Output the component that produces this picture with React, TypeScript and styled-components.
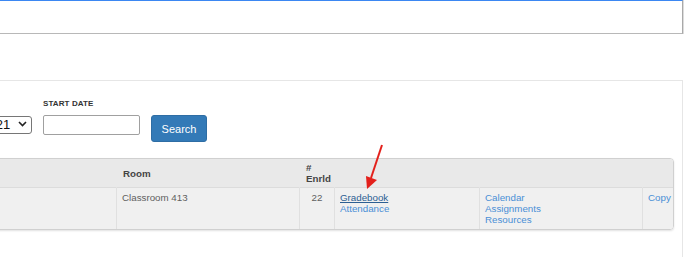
import { styled, createGlobalStyle } from "styled-components";

const GlobalStyle = createGlobalStyle`
  html, body {
    margin: 0;
    padding: 0;
    background: #fff;
  }
  body {
    font-family: "Liberation Sans", Arial, sans-serif;
    overflow: hidden;
  }
`;

const Page = styled.div`
  position: relative;
  width: 688px;
  height: 257px;
  overflow: hidden;
`;

const TopBox = styled.div`
  box-sizing: border-box;
  margin-left: -60px;
  width: 743px;
  height: 34px;
  border-top: 1px solid #3b87f2;
  border-right: 1px solid #a9a9a9;
  border-bottom: 1px solid #b8b8b8;
  box-shadow: 1px 0 0 #dcdcdc;
  background: #fff;
`;

const Panel = styled.div`
  box-sizing: border-box;
  margin-top: 46px;
  margin-left: -60px;
  width: 743px;
  height: 200px;
  padding: 17px 8px 0 20px;
  border-top: 1px solid #e6e6e6;
  border-right: 1px solid #e6e6e6;
`;

const Filters = styled.div`
  display: flex;
  align-items: flex-start;
  gap: 11px;
`;

const FormGroup = styled.div<{ $shift?: number }>`
  display: flex;
  flex-direction: column;
  margin-left: ${(p) => p.$shift ?? 0}px;
`;

const Label = styled.label`
  display: block;
  height: 14px;
  margin-bottom: 3px;
  font-size: 8px;
  line-height: 12px;
  font-weight: bold;
  color: #333;
  letter-spacing: 0.1px;
  white-space: nowrap;
`;

const SelectWrap = styled.div`
  position: relative;
  width: 88px;
  height: 18px;
`;

const Select = styled.select`
  box-sizing: border-box;
  appearance: none;
  width: 100%;
  height: 100%;
  padding: 0 0 0 3px;
  border: 1px solid #767676;
  border-radius: 3px;
  background: #fff;
  color: #111;
  font-family: "Liberation Sans", Arial, sans-serif;
  font-size: 13px;
`;

const Chevron = styled.svg`
  position: absolute;
  right: 5px;
  top: 6px;
  pointer-events: none;
`;

const DateInput = styled.input`
  box-sizing: border-box;
  width: 97px;
  height: 20px;
  border: 1px solid #a0a0a0;
  border-radius: 2px;
  background: #fff;
`;

const SearchButton = styled.button`
  box-sizing: border-box;
  width: 56px;
  height: 27px;
  border: 1px solid #2e6da4;
  border-radius: 3px;
  background: #337ab7;
  color: #fff;
  font-family: "Liberation Sans", Arial, sans-serif;
  font-size: 11px;
  cursor: pointer;
`;

const Table = styled.table`
  margin-top: 16px;
  width: 712px;
  table-layout: fixed;
  border-collapse: separate;
  border-spacing: 0;
  border: 1px solid #d0d0d0;
  border-radius: 4px;
  box-shadow: 0 1px 2px rgba(0, 0, 0, 0.12);
  overflow: hidden;
  font-size: 9.75px;
  line-height: 11px;
`;

const HeadCell = styled.th<{ $first?: boolean }>`
  box-sizing: border-box;
  height: 29px;
  padding: 2px 6px;
  background: #e9e9e9;
  border-left: ${(p) => (p.$first ? "none" : "1px solid #e9e9e9")};
  border-bottom: 1px solid #dcdcdc;
  color: #444;
  font-weight: bold;
  text-align: left;
  vertical-align: middle;
`;

const Cell = styled.td<{ $first?: boolean; $center?: boolean }>`
  box-sizing: border-box;
  height: 41px;
  padding: 4px 5px;
  background: #f0f0f0;
  border-left: ${(p) => (p.$first ? "none" : "1px solid #e0e0e0")};
  color: #5f5f5f;
  text-align: ${(p) => (p.$center ? "center" : "left")};
  vertical-align: top;
`;

const LinkList = styled.div`
  display: flex;
  flex-direction: column;
`;

const TableLink = styled.a<{ $active?: boolean }>`
  color: ${(p) => (p.$active ? "#2c5f93" : "#4a8fd6")};
  text-decoration: ${(p) => (p.$active ? "underline" : "none")};
  cursor: pointer;
`;

const Arrow = styled.svg`
  position: absolute;
  left: 360px;
  top: 142px;
  pointer-events: none;
`;

function App() {
  return (
    <Page>
      <GlobalStyle />
      <TopBox />
      <Panel>
        <Filters>
          <FormGroup $shift={-16}>
            <Label>&nbsp;</Label>
            <SelectWrap>
              <Select defaultValue="2020-2021">
                <option>2020-2021</option>
                <option>2021-2022</option>
              </Select>
              <Chevron width="9" height="6" viewBox="0 0 9 6">
                <path d="M1 1l3.5 3.5L8 1" fill="none" stroke="#222" strokeWidth="1.6" />
              </Chevron>
            </SelectWrap>
          </FormGroup>
          <FormGroup>
            <Label>START DATE</Label>
            <DateInput type="text" />
          </FormGroup>
          <FormGroup>
            <Label>&nbsp;</Label>
            <SearchButton>Search</SearchButton>
          </FormGroup>
        </Filters>
        <Table>
          <colgroup>
            <col style={{ width: 155 }} />
            <col style={{ width: 183 }} />
            <col style={{ width: 35 }} />
            <col style={{ width: 145 }} />
            <col style={{ width: 163 }} />
            <col style={{ width: 31 }} />
          </colgroup>
          <thead>
            <tr>
              <HeadCell $first />
              <HeadCell>Room</HeadCell>
              <HeadCell>
                #<br />
                Enrld
              </HeadCell>
              <HeadCell />
              <HeadCell />
              <HeadCell />
            </tr>
          </thead>
          <tbody>
            <tr>
              <Cell $first />
              <Cell>Classroom 413</Cell>
              <Cell $center>22</Cell>
              <Cell>
                <LinkList>
                  <TableLink $active>Gradebook</TableLink>
                  <TableLink>Attendance</TableLink>
                </LinkList>
              </Cell>
              <Cell>
                <LinkList>
                  <TableLink>Calendar</TableLink>
                  <TableLink>Assignments</TableLink>
                  <TableLink>Resources</TableLink>
                </LinkList>
              </Cell>
              <Cell>
                <TableLink>Copy</TableLink>
              </Cell>
            </tr>
          </tbody>
        </Table>
      </Panel>
      <Arrow width="30" height="50" viewBox="0 0 30 50">
        <line x1="22" y1="3" x2="11" y2="36" stroke="#e3201b" strokeWidth="2" />
        <polygon points="6,34 17,38 7,47" fill="#e3201b" />
      </Arrow>
    </Page>
  );
}

export default App;
